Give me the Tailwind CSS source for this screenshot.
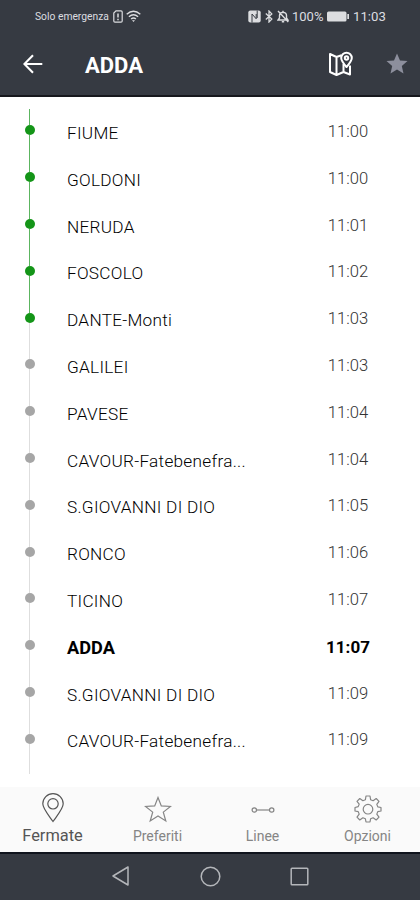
<!DOCTYPE html>
<html lang="it">
<head>
  <meta charset="UTF-8">
  <meta name="viewport" content="width=device-width, initial-scale=1.0">
  <title>Fermate - ADDA</title>
  <script src="https://cdn.jsdelivr.net/npm/@tailwindcss/browser@4"></script>
</head>
<body class="bg-white h-[900px] flex flex-col overflow-hidden font-['Roboto',sans-serif]">
  <!-- Status bar -->
  <div class="bg-[#363a42] h-8 shrink-0 flex items-center pl-[35px] pr-[34px] text-[#dcdde0]">
    <span class="text-[10.3px] leading-8 w-[75px] pt-px whitespace-nowrap">Solo emergenza</span>
    <svg class="ml-[3px] w-[10px] h-[13px]" viewBox="0 0 10 13" fill="none" stroke="currentColor" stroke-width="1.2">
      <path d="M3 .8h5q1.200 0 1.200 1.200v9q0 1.200-1.200 1.200H2Q.8 12.200.8 11V3z"/>
      <path d="M5 3.500v4M5 8.800v1.400" stroke-width="1.500"/>
    </svg>
    <svg class="ml-[3px] w-[15px] h-[13px]" viewBox="0 0 15 13" fill="none" stroke="currentColor" stroke-width="1.400">
      <path d="M.7 4.300q6.800-6 13.600 0M2.900 6.700q4.600-4 9.200 0M5.100 9q2.400-2 4.800 0"/>
      <path d="M6 10.200h3L7.500 12z" fill="currentColor" stroke="none"/>
    </svg>
    <svg class="ml-auto w-[13px] h-[13px]" viewBox="0 0 13 13">
      <rect x=".3" y=".5" width="12.400" height="12" rx="2" fill="currentColor"/>
      <path d="M4 12.500V4l4.200 4.800V4M9.200.5v7.500" fill="none" stroke="#363a42" stroke-width="1"/>
    </svg>
    <svg class="ml-[4px] w-[8px] h-[13px]" viewBox="0 0 8 13" fill="none" stroke="currentColor" stroke-width="1.300">
      <path d="M.8 3.600l6 5.500L4 12V1l2.800 2.900-6 5.500"/>
    </svg>
    <svg class="ml-[4px] w-[12px] h-[13px]" viewBox="0 0 12 13" fill="none" stroke="currentColor" stroke-width="1.400">
      <path d="M1 10h10L9.500 8V5.500Q9.500 2.500 6 2.200 2.500 2.500 2.500 5.500V8zM6 .8v1.400M4.800 11.800h2.400M1 1l10.300 11"/>
    </svg>
    <span class="ml-[3px] w-[32px] pt-px text-[13px] leading-8 whitespace-nowrap">100%</span>
    <svg class="ml-[3px] w-[22px] h-[11px]" viewBox="0 0 22 11" fill="currentColor">
      <rect y=".5" width="19.500" height="10" rx="1.500"/>
      <rect x="20.300" y="3" width="1.700" height="5"/>
    </svg>
    <span class="ml-[4px] w-[33px] pt-px text-[13.200px] leading-8 whitespace-nowrap">11:03</span>
  </div>

  <!-- Title bar -->
  <header class="bg-[#363a42] h-[65px] shrink-0 flex items-center pl-[23px] pr-[12px] border-b-2 border-[#17181d] text-white">
    <svg class="w-[20px] h-[20px]" viewBox="0 0 20 20" fill="none" stroke="currentColor" stroke-width="2.100">
      <path d="M19.300 10H1.500M10 1.300L1.400 10l8.600 8.700"/>
    </svg>
    <h1 class="ml-[42px] pt-[5px] text-[22px] leading-8 font-bold">ADDA</h1>
    <svg class="ml-auto w-[26px] h-[26px]" viewBox="0 0 26 26" fill="none" stroke="currentColor" stroke-width="2" stroke-linejoin="round">
      <path d="M13.500 4.200L8.500 6 2 3v18l6.500 3 7-3 6.500 2.500V14.500M8.500 6v18M15.500 13v8"/>
      <circle cx="18.500" cy="7" r="1.700"/>
      <path d="M18.500 16C15 12 13.200 9.800 13.200 7a5.300 5.300 0 0 1 10.600 0c0 2.800-1.800 5-5.300 9z"/>
    </svg>
    <svg class="ml-[32px] w-[22px] h-[21px] text-[#8d8f9d]" viewBox="0 0 22 21" fill="currentColor">
      <path d="M11 .5l3 6.900 7.500.7-5.700 5 1.700 7.400L11 16.600l-6.500 3.900 1.700-7.400-5.700-5 7.500-.7z"/>
    </svg>
  </header>

  <!-- Stops -->
  <main class="grow pt-[10px]">
    <ul id="stops"></ul>
  </main>

  <!-- Tab bar -->
  <nav class="bg-[#fafafa] h-[65px] shrink-0 grid grid-cols-4 text-center text-[#858585] text-[14px] leading-5">
    <a class="flex flex-col items-center text-[#555]">
      <svg class="mt-[6px] w-[24px] h-[30px]" viewBox="0 0 24 30" fill="none" stroke="currentColor" stroke-width="1.200">
        <path d="M12 28.500C7 21.500 1.800 15.500 1.800 10.800a10.200 10.200 0 0 1 20.400 0C22.200 15.500 17 21.500 12 28.500z"/>
        <circle cx="12" cy="10.800" r="5.200"/>
      </svg>
      <span class="mt-[3px] text-[16.4px]">Fermate</span>
    </a>
    <a class="flex flex-col items-center">
      <svg class="mt-[9px] w-[28px] h-[27px]" viewBox="0 0 28 27" fill="none" stroke="currentColor" stroke-width="1.200">
        <path d="M14 1.500l3.300 8.400 9.200.5-7.200 5.700 2.500 8.900-7.800-5-7.800 5 2.500-8.900-7.200-5.700 9.200-.5z"/>
      </svg>
      <span class="mt-[3px]">Preferiti</span>
    </a>
    <a class="flex flex-col items-center">
      <svg class="mt-[9px] w-[24px] h-[27px]" viewBox="0 0 24 27" fill="none" stroke="currentColor" stroke-width="1.200">
        <circle cx="3.300" cy="14" r="2.200"/>
        <circle cx="20.700" cy="14" r="2.200"/>
        <path d="M5.500 14h13"/>
      </svg>
      <span class="mt-[3px]">Linee</span>
    </a>
    <a class="flex flex-col items-center">
      <svg class="mt-[8px] w-[28px] h-[28px]" viewBox="0 0 28 28" fill="none" stroke="currentColor" stroke-width="1.200" stroke-linejoin="round">
        <path d="M12 1h4l.6 3.700 2.500 1 3.100-2.200 2.800 2.800-2.200 3.100 1 2.500 3.200.6v3.500l-3.200.6-1 2.500 2.200 3.100-2.800 2.800-3.100-2.200-2.500 1L16 27h-4l-.6-3.200-2.500-1L5.800 25 3 22.200l2.200-3.100-1-2.500L1 16v-3.500l3.200-.9 1-2.500L3 6.300l2.800-2.800 3.100 2.200 2.500-1z"/>
        <circle cx="14" cy="14.200" r="4.800"/>
      </svg>
      <span class="mt-[3px]">Opzioni</span>
    </a>
  </nav>

  <!-- System navigation -->
  <div class="bg-[#363a42] h-[48px] shrink-0 border-t-2 border-[#10141d] flex items-center pl-[111px] pb-[2px] text-[#b4b6ba]">
    <svg class="w-[19px] h-[22px]" viewBox="0 0 19 22" fill="none" stroke="currentColor" stroke-width="1.500" stroke-linejoin="round">
      <path d="M17 2v18L2 11z"/>
    </svg>
    <svg class="ml-[70px] w-[21px] h-[21px]" viewBox="0 0 21 21" fill="none" stroke="currentColor" stroke-width="1.500">
      <circle cx="10.500" cy="10.500" r="9.300"/>
    </svg>
    <svg class="ml-[69px] w-[19px] h-[19px]" viewBox="0 0 19 19" fill="none" stroke="currentColor" stroke-width="1.500">
      <rect x="1.200" y="1.200" width="16.600" height="16.600" rx=".8"/>
    </svg>
  </div>

  <script>
    const stops = [
      ["FIUME", "11:00"],
      ["GOLDONI", "11:00"],
      ["NERUDA", "11:01"],
      ["FOSCOLO", "11:02"],
      ["DANTE-Monti", "11:03"],
      ["GALILEI", "11:03"],
      ["PAVESE", "11:04"],
      ["CAVOUR-Fatebenefra...", "11:04"],
      ["S.GIOVANNI DI DIO", "11:05"],
      ["RONCO", "11:06"],
      ["TICINO", "11:07"],
      ["ADDA", "11:07"],
      ["S.GIOVANNI DI DIO", "11:09"],
      ["CAVOUR-Fatebenefra...", "11:09"]
    ];
    const passed = 5;   // stops the bus has already left behind
    const current = 11;

    document.getElementById("stops").innerHTML = stops.map(([name, time], i) => {
      const green = i < passed;
      const above = green ? "bg-[#5cb560]" : "bg-[#dedede]";
      const below = i < passed - 1 ? "bg-[#5cb560]" : "bg-[#dedede]";
      const top = i === 0 ? "h-[16.400px]" : "h-[18.400px]";
      const tail = i === stops.length - 1 ? "h-[30px]" : "h-[18.400px]";
      const dot = green ? "bg-[#149518]" : "bg-[#a6a6a6]";
      const nameStyle = i === current ? "font-bold text-black text-[18.200px]" : "font-light text-black text-[17.200px] tracking-[0.28px]";
      const timeStyle = i === current ? "font-bold text-black text-[17px]" : "font-light text-[#333] text-[16.600px]";
      return `
        <li class="h-[46.800px] flex items-start">
          <div class="ml-[25px] w-[10px] flex flex-col items-center ${i === 0 ? "pt-[2px]" : ""}">
            <span class="w-px mr-px shrink-0 ${above} ${top}"></span>
            <span class="w-[10px] h-[10px] rounded-full shrink-0 ${dot}"></span>
            <span class="w-px mr-px shrink-0 ${below} ${tail}"></span>
          </div>
          <span class="ml-[32px] w-[230px] pt-[14px] leading-6 whitespace-nowrap ${nameStyle}">${name}</span>
          <span class="w-[102px] pt-[13px] text-center leading-6 ${timeStyle}">${time}</span>
        </li>`;
    }).join("");
  </script>
</body>
</html>
